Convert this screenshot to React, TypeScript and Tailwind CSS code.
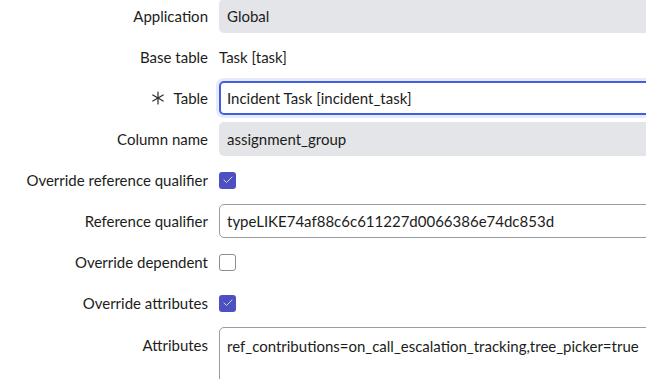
import { Check } from 'lucide-react';

type Row = {
  label: string;
  kind: 'readonly' | 'text' | 'focus' | 'input' | 'check' | 'area';
  value?: string;
  checked?: boolean;
  required?: boolean;
};

const rows: Row[] = [
  { label: 'Application', kind: 'readonly', value: 'Global' },
  { label: 'Base table', kind: 'text', value: 'Task [task]' },
  { label: 'Table', kind: 'focus', value: 'Incident Task [incident_task]', required: true },
  { label: 'Column name', kind: 'readonly', value: 'assignment_group' },
  { label: 'Override reference qualifier', kind: 'check', checked: true },
  { label: 'Reference qualifier', kind: 'input', value: 'typeLIKE74af88c6c611227d0066386e74dc853d' },
  { label: 'Override dependent', kind: 'check', checked: false },
  { label: 'Override attributes', kind: 'check', checked: true },
  { label: 'Attributes', kind: 'area', value: 'ref_contributions=on_call_escalation_tracking,tree_picker=true' },
];

// thin six-armed asterisk used for mandatory fields
const Required = () => (
  <svg width="14" height="14" viewBox="0 0 14 14" className="mr-[9px]" stroke="#2a2b30" strokeWidth="1.2" strokeLinecap="round">
    <line x1="7" y1="1" x2="7" y2="13" />
    <line x1="1.8" y1="4" x2="12.2" y2="10" />
    <line x1="1.8" y1="10" x2="12.2" y2="4" />
  </svg>
);

const Field = ({ row }: { row: Row }) => {
  switch (row.kind) {
    case 'readonly':
      return (
        <div className="h-[34px] w-[460px] shrink-0 rounded-[5px] bg-[#e4e5e8] px-[8px] flex items-center">
          {row.value}
        </div>
      );
    case 'text':
      return <div className="h-[34px] flex items-center">{row.value}</div>;
    case 'focus':
      return (
        <div className="h-[34px] w-[460px] shrink-0 rounded-[5px] border-2 border-[#3f5ee0] px-[6px] flex items-center shadow-[0_0_0_3px_#e6eafb]">
          {row.value}
        </div>
      );
    case 'input':
      return (
        <div className="h-[34px] w-[460px] shrink-0 rounded-[5px] border border-[#9a9ca3] px-[7px] flex items-center">
          {row.value}
        </div>
      );
    case 'check':
      return (
        <div className="h-[34px] flex items-center">
          {row.checked ? (
            <div className="h-[17px] w-[17px] rounded-[3px] bg-[#4c50c0] flex items-center justify-center">
              <Check size={12} strokeWidth={1.5} className="text-white" />
            </div>
          ) : (
            <div className="h-[17px] w-[17px] rounded-[3px] border border-[#8b8d94] bg-white" />
          )}
        </div>
      );
    case 'area':
      return (
        <div className="h-[70px] w-[460px] shrink-0 rounded-t-[5px] border border-[#9a9ca3] px-[7px] pt-[7px]">
          {row.value}
        </div>
      );
  }
};

export default function App() {
  return (
    <div className="h-[379px] w-[646px] overflow-hidden bg-white text-[15px] text-[#1c1d20] font-['Lato','Open_Sans',sans-serif]">
      <div className="-mt-px flex flex-col gap-[7px]">
        {rows.map((row) => (
          <div key={row.label} className="flex items-start gap-[11px]">
            <div className={`${row.kind === 'area' ? 'h-[36px]' : 'h-[34px]'} w-[208px] shrink-0 flex items-center justify-end`}>
              {row.required && <Required />}
              {row.label}
            </div>
            <Field row={row} />
          </div>
        ))}
      </div>
    </div>
  );
}
